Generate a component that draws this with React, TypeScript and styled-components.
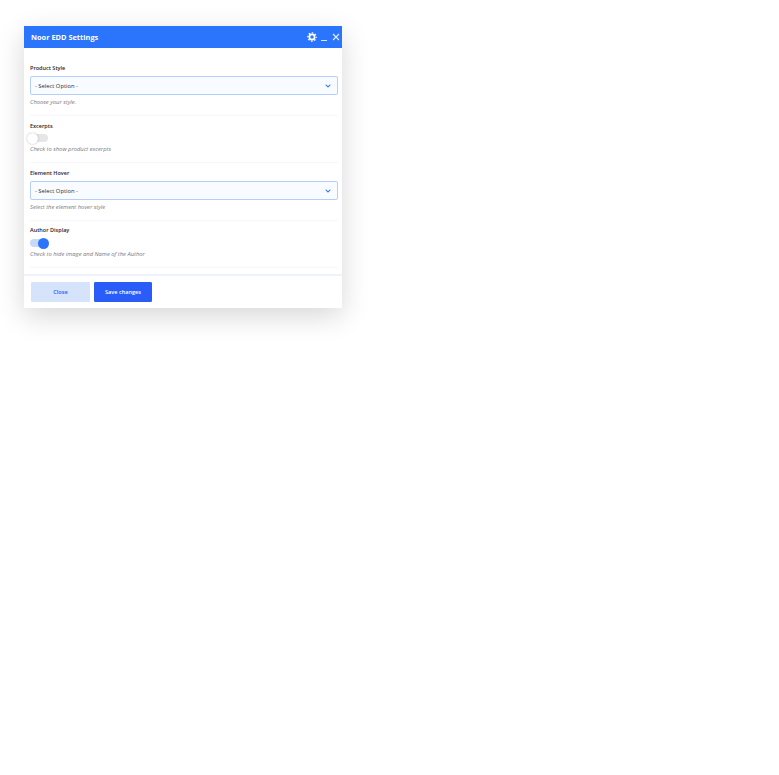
import React from "react";
import styled, { createGlobalStyle } from "styled-components";
import { FaChevronDown } from "react-icons/fa";

const GlobalStyle = createGlobalStyle`
  html, body {
    margin: 0;
    padding: 0;
    background: #fff;
    font-family: "Open Sans", "Liberation Sans", sans-serif;
  }
`;

const Page = styled.div`
  min-height: 100vh;
  box-sizing: border-box;
  padding: 26px 0 0 24px;
`;

const Dialog = styled.div`
  width: 318px;
  height: 282px;
  display: flex;
  flex-direction: column;
  background: #fff;
  box-shadow: 0 8px 26px rgba(0, 0, 0, 0.16);
`;

const Header = styled.div`
  height: 22px;
  flex: none;
  display: flex;
  align-items: center;
  padding: 0 1px 0 7px;
  background: #2b74fc;
  color: #fff;
`;

const Title = styled.div`
  flex: 1;
  font-size: 7.4px;
  font-weight: 700;
`;

const HeaderIcons = styled.div`
  display: flex;
  align-items: center;
  gap: 3px;
`;

const Body = styled.div`
  flex: 1;
  padding: 0 4px 0 6px;
`;

const Field = styled.div<{ $height: number; $top: number }>`
  height: ${({ $height }) => $height}px;
  box-sizing: border-box;
  padding-top: ${({ $top }) => $top}px;
  border-bottom: 1px solid #f6f7fb;
`;

const Label = styled.div`
  font-size: 5.5px;
  line-height: 8px;
  font-weight: 600;
  color: #1f232c;
`;

const Hint = styled.div`
  font-size: 5.8px;
  line-height: 8px;
  font-style: italic;
  color: #77797f;
`;

const SelectBox = styled.div`
  height: 19px;
  margin: 4px 0 3px;
  box-sizing: border-box;
  padding: 0 6px 0 4px;
  display: flex;
  align-items: center;
  justify-content: space-between;
  background: #f8fbff;
  border: 1px solid #b5cffd;
  border-radius: 2px;
  font-size: 5.8px;
  color: #2a2e36;
`;

const SwitchTrack = styled.div<{ $on: boolean }>`
  position: relative;
  width: 18px;
  height: 8px;
  margin: ${({ $on }) => ($on ? "5px 0 3px" : "4px 0 3px")};
  border-radius: 4px;
  background: ${({ $on }) => ($on ? "#c6d9fb" : "#e6e6e6")};
`;

const SwitchKnob = styled.div<{ $on: boolean }>`
  position: absolute;
  top: -1.5px;
  width: 11px;
  height: 11px;
  border-radius: 50%;
  left: ${({ $on }) => ($on ? "8px" : "-3px")};
  background: ${({ $on }) => ($on ? "#2b74fc" : "#fff")};
  box-shadow: ${({ $on }) => ($on ? "none" : "0 0 2px rgba(0, 0, 0, 0.3)")};
`;

const Footer = styled.div`
  height: 34px;
  flex: none;
  box-sizing: border-box;
  padding: 6px 0 0 7px;
  display: flex;
  gap: 4px;
  border-top: 2px solid #eef2fd;
`;

const Button = styled.button<{ $primary?: boolean }>`
  height: 20px;
  width: ${({ $primary }) => ($primary ? "58px" : "59px")};
  padding: 0;
  border: 1px solid ${({ $primary }) => ($primary ? "#2a5ef0" : "#d5e3fb")};
  border-radius: 1px;
  background: ${({ $primary }) => ($primary ? "#2a5cfa" : "#d5e3fb")};
  color: ${({ $primary }) => ($primary ? "#fff" : "#2a5cfa")};
  font-family: inherit;
  font-size: 5.6px;
  font-weight: 600;
`;

const GearIcon = () => (
  <svg width="10" height="10" viewBox="0 0 10 10" fill="none" stroke="#fff">
    <circle cx="5" cy="5" r="2.6" strokeWidth="1.7" />
    <circle cx="5" cy="5" r="4.1" strokeWidth="1.4" strokeDasharray="1.61 1.61" strokeDashoffset="0.8" />
  </svg>
);

const MinimizeIcon = () => (
  <svg width="8" height="10" viewBox="0 0 8 10">
    <rect x="1" y="8" width="6" height="1" fill="#d9e6ff" />
  </svg>
);

const CloseIcon = () => (
  <svg width="10" height="10" viewBox="0 0 10 10">
    <path d="M2 2 L8 8 M8 2 L2 8" stroke="#e6efff" strokeWidth="1.1" />
  </svg>
);

const App: React.FC = () => {
  return (
    <Page>
      <GlobalStyle />
      <Dialog>
        <Header>
          <Title>Noor EDD Settings</Title>
          <HeaderIcons>
            <GearIcon />
            <MinimizeIcon />
            <CloseIcon />
          </HeaderIcons>
        </Header>
        <Body>
          <Field $height={68} $top={16}>
            <Label>Product Style</Label>
            <SelectBox>
              - Select Option -
              <FaChevronDown size={6} color="#2b74fc" />
            </SelectBox>
            <Hint>Choose your style.</Hint>
          </Field>
          <Field $height={47} $top={6}>
            <Label>Excerpts</Label>
            <SwitchTrack $on={false}>
              <SwitchKnob $on={false} />
            </SwitchTrack>
            <Hint>Check to show product excerpts</Hint>
          </Field>
          <Field $height={58} $top={6}>
            <Label>Element Hover</Label>
            <SelectBox>
              - Select Option -
              <FaChevronDown size={6} color="#2b74fc" />
            </SelectBox>
            <Hint>Select the element hover style</Hint>
          </Field>
          <Field $height={47} $top={5}>
            <Label>Author Display</Label>
            <SwitchTrack $on>
              <SwitchKnob $on />
            </SwitchTrack>
            <Hint>Check to hide image and Name of the Author</Hint>
          </Field>
        </Body>
        <Footer>
          <Button>Close</Button>
          <Button $primary>Save changes</Button>
        </Footer>
      </Dialog>
    </Page>
  );
};

export default App;
